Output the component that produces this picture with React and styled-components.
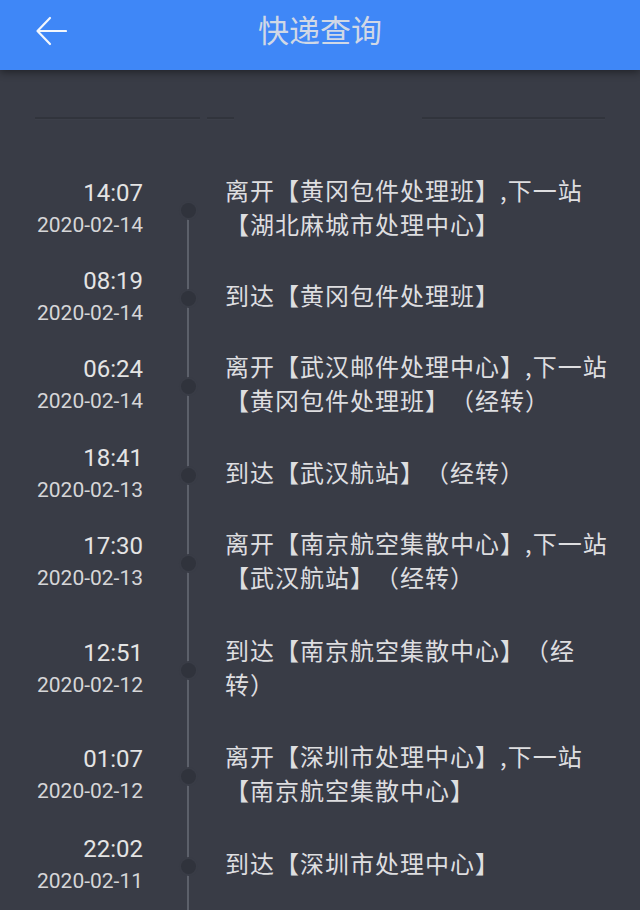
import React from 'react';
import styled, { createGlobalStyle } from 'styled-components';

const GlobalStyle = createGlobalStyle`
  html, body {
    margin: 0;
    padding: 0;
    background: #393c46;
  }
  #root {
    min-height: 910px;
  }
`;

const Page = styled.div`
  width: 640px;
  height: 910px;
  overflow: hidden;
  background: #393c46;
  font-family: Roboto, "Noto Sans CJK SC", sans-serif;
`;

const Header = styled.header`
  position: relative;
  z-index: 2;
  height: 70px;
  display: flex;
  align-items: center;
  justify-content: center;
  background: #3f87f7;
  box-shadow: 0 2px 8px rgba(0, 0, 0, 0.45);
`;

const BackButton = styled.button`
  position: absolute;
  left: 33px;
  top: 15px;
  width: 36px;
  height: 32px;
  padding: 0;
  border: none;
  background: transparent;
  display: flex;
  align-items: center;
  justify-content: center;
`;

const Title = styled.h1`
  margin: 0;
  font-family: "Noto Sans CJK SC", sans-serif;
  font-size: 31px;
  font-weight: 400;
  color: #d0d8e6;
  margin-top: -13px;
`;

const Divider = styled.div`
  display: flex;
  align-items: center;
  height: 96px;
  padding-left: 35px;
`;

const Segment = styled.span`
  display: block;
  width: ${(p) => p.$w}px;
  margin-left: ${(p) => p.$ml || 0}px;
  height: 2px;
  background: #31343c;
  box-shadow: 0 1px 0 rgba(255, 255, 255, 0.02);
`;

const List = styled.ul`
  list-style: none;
  margin: 0;
  padding: 0;
`;

const Row = styled.li`
  display: flex;
  padding-top: ${(p) => p.$pad || 0}px;
`;

const TimeCol = styled.div`
  width: 143px;
  height: 88px;
  display: flex;
  flex-direction: column;
  justify-content: center;
  align-items: flex-end;
  font-family: Roboto, sans-serif;
`;

const Time = styled.div`
  font-size: 24px;
  line-height: 32px;
  color: #e4e4e4;
  margin-top: -3px;
`;

const DateText = styled.div`
  font-size: 21px;
  line-height: 32px;
  color: #d6d6d8;
`;

const Axis = styled.div`
  position: relative;
  width: 74px;
  padding-left: 8px;
  display: flex;
  align-items: center;
  justify-content: center;

  &::before {
    content: '';
    position: absolute;
    left: 44px;
    width: 2px;
    top: ${(p) => (p.$first ? '50%' : `-${p.$pad || 0}px`)};
    bottom: 0;
    background: #5c606a;
  }
`;

const Dot = styled.span`
  position: relative;
  z-index: 1;
  width: 15px;
  height: 15px;
  margin-left: 1px;
  border-radius: 50%;
  background: #30333c;
  box-shadow: 0 0 0 2px #393c46;
`;

const Content = styled.div`
  width: 390px;
  display: flex;
  align-items: center;
  font-family: "Noto Sans CJK SC", sans-serif;
  font-size: 24px;
  letter-spacing: 1px;
  line-height: 34px;
  color: #dedee0;
  padding-bottom: 7px;
  box-sizing: border-box;
  height: 88px;
  text-spacing-trim: space-all;
`;

const events = [
  { time: '14:07', date: '2020-02-14', text: '离开【黄冈包件处理班】,下一站【湖北麻城市处理中心】' },
  { time: '08:19', date: '2020-02-14', text: '到达【黄冈包件处理班】' },
  { time: '06:24', date: '2020-02-14', text: '离开【武汉邮件处理中心】,下一站【黄冈包件处理班】（经转）' },
  { time: '18:41', date: '2020-02-13', text: '到达【武汉航站】（经转）', pad: 1 },
  { time: '17:30', date: '2020-02-13', text: '离开【南京航空集散中心】,下一站【武汉航站】（经转）' },
  { time: '12:51', date: '2020-02-12', text: '到达【南京航空集散中心】（经转）', pad: 19 },
  { time: '01:07', date: '2020-02-12', text: '离开【深圳市处理中心】,下一站【南京航空集散中心】', pad: 18 },
  { time: '22:02', date: '2020-02-11', text: '到达【深圳市处理中心】', pad: 2 },
];

const BackIcon = () => (
  <svg width="32" height="30" viewBox="0 0 32 30" fill="none">
    <path d="M31 15H3" stroke="#f2f6fc" strokeWidth="2.2" strokeLinecap="round" />
    <path d="M15 2L2.5 15L15 28" stroke="#f2f6fc" strokeWidth="2.2" strokeLinecap="round" strokeLinejoin="round" />
  </svg>
);

export default function App() {
  return (
    <Page>
      <GlobalStyle />
      <Header>
        <BackButton aria-label="返回">
          <BackIcon />
        </BackButton>
        <Title>快递查询</Title>
      </Header>
      <Divider>
        <Segment $w={165} />
        <Segment $w={27} $ml={7} />
        <Segment $w={183} $ml={188} />
      </Divider>
      <List>
        {events.map((e, i) => (
          <Row key={i} $pad={e.pad}>
            <TimeCol>
              <Time>{e.time}</Time>
              <DateText>{e.date}</DateText>
            </TimeCol>
            <Axis $first={i === 0} $pad={e.pad}>
              <Dot />
            </Axis>
            <Content>
              <div>{e.text}</div>
            </Content>
          </Row>
        ))}
      </List>
    </Page>
  );
}
